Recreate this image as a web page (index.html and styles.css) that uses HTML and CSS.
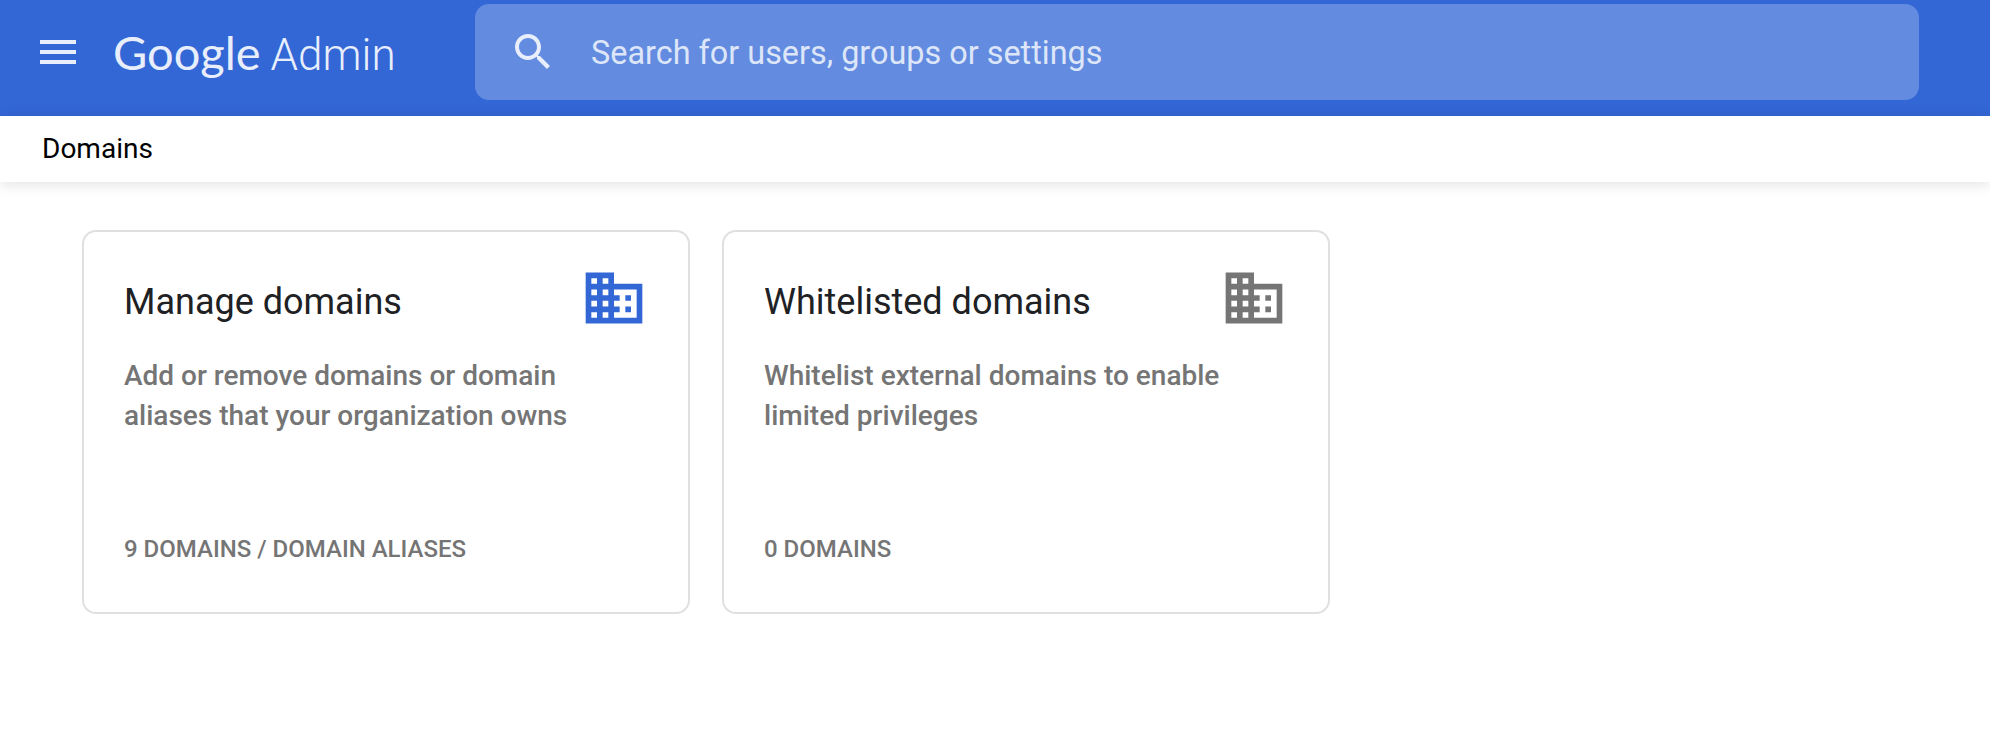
FILE: index.html
```html
<!DOCTYPE html>
<html lang="en">
<head>
  <meta charset="UTF-8">
  <title>Domains - Admin Console</title>
  <link rel="stylesheet" href="styles.css">
</head>
<body>

  <header class="topbar">
    <svg class="menu-icon" viewBox="0 0 24 24"><path d="M3 18h18v-2H3v2zm0-5h18v-2H3v2zm0-7v2h18V6H3z"/></svg>
    <div class="logo"><span class="logo-google">Google</span> <span class="logo-admin">Admin</span></div>
    <div class="search">
      <svg class="search-icon" viewBox="0 0 24 24"><path d="M15.5 14h-.79l-.28-.27C15.41 12.59 16 11.11 16 9.5 16 5.91 13.09 3 9.5 3S3 5.91 3 9.5 5.91 16 9.5 16c1.61 0 3.09-.59 4.23-1.57l.27.28v.79l5 4.99L20.49 19l-4.99-5zm-6 0C7.01 14 5 11.99 5 9.5S7.01 5 9.5 5 14 7.01 14 9.5 11.99 14 9.5 14z"/></svg>
      <span class="search-text">Search for users, groups or settings</span>
    </div>
  </header>

  <div class="subbar">Domains</div>

  <main class="cards">
    <section class="card">
      <div class="card-head">
        <h2>Manage domains</h2>
        <svg class="domain-icon blue" viewBox="0 0 24 24"><path d="M12 7V3H2v18h20V7H12zM6 19H4v-2h2v2zm0-4H4v-2h2v2zm0-4H4V9h2v2zm0-4H4V5h2v2zm4 12H8v-2h2v2zm0-4H8v-2h2v2zm0-4H8V9h2v2zm0-4H8V5h2v2zm10 12h-8v-2h2v-2h-2v-2h2v-2h-2V9h8v10zm-2-8h-2v2h2v-2zm0 4h-2v2h2v-2z"/></svg>
      </div>
      <p class="desc">Add or remove domains or domain aliases that your organization owns</p>
      <div class="count">9 domains / domain aliases</div>
    </section>

    <section class="card">
      <div class="card-head">
        <h2>Whitelisted domains</h2>
        <svg class="domain-icon grey" viewBox="0 0 24 24"><path d="M12 7V3H2v18h20V7H12zM6 19H4v-2h2v2zm0-4H4v-2h2v2zm0-4H4V9h2v2zm0-4H4V5h2v2zm4 12H8v-2h2v2zm0-4H8v-2h2v2zm0-4H8V9h2v2zm0-4H8V5h2v2zm10 12h-8v-2h2v-2h-2v-2h2v-2h-2V9h8v10zm-2-8h-2v2h2v-2zm0 4h-2v2h2v-2z"/></svg>
      </div>
      <p class="desc">Whitelist external domains to enable limited privileges</p>
      <div class="count">0 domains</div>
    </section>
  </main>

</body>
</html>
```

FILE: styles.css
```css
* {
  margin: 0;
  padding: 0;
  box-sizing: border-box;
  font-family: Roboto, sans-serif;
}

body {
  background: #fff;
}

.topbar {
  display: flex;
  align-items: center;
  height: 116px;
  padding: 4px 71px 16px 34px;
  background: #3367d6;
}

.menu-icon {
  width: 48px;
  height: 48px;
  fill: #e8eefb;
}

.logo {
  display: flex;
  align-items: baseline;
  width: 362px;
  margin-left: 31px;
  color: #e8eefb;
  white-space: nowrap;
}

.logo-google {
  font-family: Lato, sans-serif;
  font-size: 47px;
}

.logo-admin {
  margin-left: 10px;
  font-size: 44px;
  font-weight: 300;
}

.search {
  flex: 1;
  display: flex;
  align-items: center;
  height: 96px;
  padding-left: 34px;
  border-radius: 14px;
  background: rgba(255, 255, 255, 0.24);
}

.search-icon {
  width: 48px;
  height: 48px;
  fill: #e8eefb;
}

.search-text {
  margin-left: 34px;
  padding-top: 2px;
  font-size: 32.4px;
  color: #dde6f8;
}

.subbar {
  position: relative;
  height: 66px;
  padding-left: 42px;
  font-size: 28px;
  line-height: 66px;
  color: #000;
  background: #fff;
  box-shadow: 0 2px 14px rgba(0, 0, 0, 0.12);
}

.cards {
  display: flex;
  gap: 32px;
  padding: 48px 0 0 82px;
}

.card {
  display: flex;
  flex-direction: column;
  width: 608px;
  height: 384px;
  padding: 32px 40px 49px;
  border: 2px solid #e0e0e0;
  border-radius: 14px;
}

.card-head {
  display: flex;
  align-items: center;
  justify-content: space-between;
  height: 68px;
}

.card-head h2 {
  padding-top: 7px;
  font-size: 36px;
  font-weight: 400;
  color: #202124;
}

.domain-icon {
  width: 68px;
  height: 68px;
}

.blue {
  fill: #3367d6;
}

.grey {
  fill: #757575;
}

.desc {
  margin-top: 24px;
  max-width: 480px;
  font-size: 28px;
  font-weight: 500;
  line-height: 40px;
  color: #757575;
}

.count {
  margin-top: auto;
  font-size: 24px;
  font-weight: 500;
  text-transform: uppercase;
  color: #757575;
}
```
